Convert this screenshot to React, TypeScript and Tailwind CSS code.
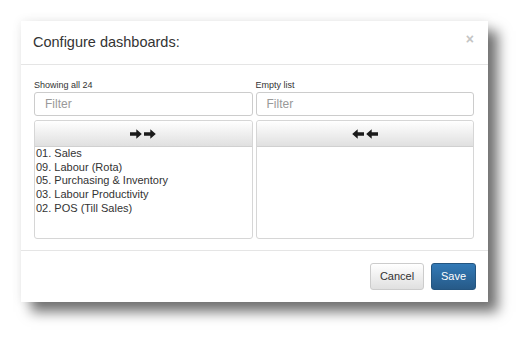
import React from "react";

const ArrowRight = () => (
  <svg width="12" height="10" viewBox="0 0 12 10">
    <path d="M0 3.2 H6.3 V0.3 L11.8 5 L6.3 9.7 V6.8 H0 Z" fill="#1a1a1a" />
  </svg>
);
const ArrowLeft = () => (
  <svg width="12" height="10" viewBox="0 0 12 10">
    <path d="M12 3.2 H5.7 V0.3 L0.2 5 L5.7 9.7 V6.8 H12 Z" fill="#1a1a1a" />
  </svg>
);

const items = [
  "01. Sales",
  "09. Labour (Rota)",
  "05. Purchasing & Inventory",
  "03. Labour Productivity",
  "02. POS (Till Sales)",
];

function Column({ label, right, list }: { label: string; right?: boolean; list: string[] }) {
  return (
    <div className="flex flex-col">
      <div className="h-[13px] text-[9px] leading-[13px] text-[#333]">{label}</div>
      <div className="h-[24px] border border-[#ccc] rounded-[3px] bg-white flex items-center pl-[10px] text-[12px] text-[#999]">
        Filter
      </div>
      <div className="mt-[4px] border border-[#d6d6d6] rounded-[3px] flex flex-col">
        <div className="h-[26px] bg-gradient-to-b from-[#ffffff] to-[#e0e0e0] border-b border-[#d0d0d0] flex items-center justify-center gap-[2px] rounded-t-[3px]">
          {right ? (
            <>
              <ArrowLeft />
              <ArrowLeft />
            </>
          ) : (
            <>
              <ArrowRight />
              <ArrowRight />
            </>
          )}
        </div>
        <div className="h-[91px] pl-[1px] text-[11px] leading-[13.7px] text-[#333]">
          {list.map((t) => (
            <div key={t}>{t}</div>
          ))}
        </div>
      </div>
    </div>
  );
}

export default function App() {
  return (
    <div
      className="w-[530px] h-[338px] bg-white pt-[21px] pl-[21px]"
      style={{ fontFamily: '"Liberation Sans", Arial, sans-serif' }}
    >
      <div className="w-[467px] h-[281px] bg-white flex flex-col shadow-[10px_10px_12px_rgba(0,0,0,0.55),0_0_10px_rgba(0,0,0,0.08)]">
        <div className="h-[44px] border-b border-[#e5e5e5] flex items-center justify-between pl-[12px] pr-[14px]">
          <div className="text-[14.5px] text-[#333]">Configure dashboards:</div>
          <div className="text-[14px] font-bold text-[#c4c4c4] -mt-[6px]">×</div>
        </div>
        <div className="flex-1 pl-[13px] pr-[14px] pt-[14px]">
          <div className="grid grid-cols-2 gap-[3px]">
            <Column label="Showing all 24" list={items} />
            <Column label="Empty list" right list={[]} />
          </div>
        </div>
        <div className="h-[52px] border-t border-[#e5e5e5] flex items-center justify-end gap-[7px] pr-[12px]">
          <div className="w-[54px] h-[27px] rounded-[3px] border border-[#ccc] bg-gradient-to-b from-[#ffffff] to-[#e0e0e0] flex items-center justify-center text-[11px] text-[#333]">
            Cancel
          </div>
          <div className="w-[45px] h-[27px] rounded-[3px] border border-[#245580] bg-gradient-to-b from-[#337ab7] to-[#265a88] flex items-center justify-center text-[11px] text-white">
            Save
          </div>
        </div>
      </div>
    </div>
  );
}
